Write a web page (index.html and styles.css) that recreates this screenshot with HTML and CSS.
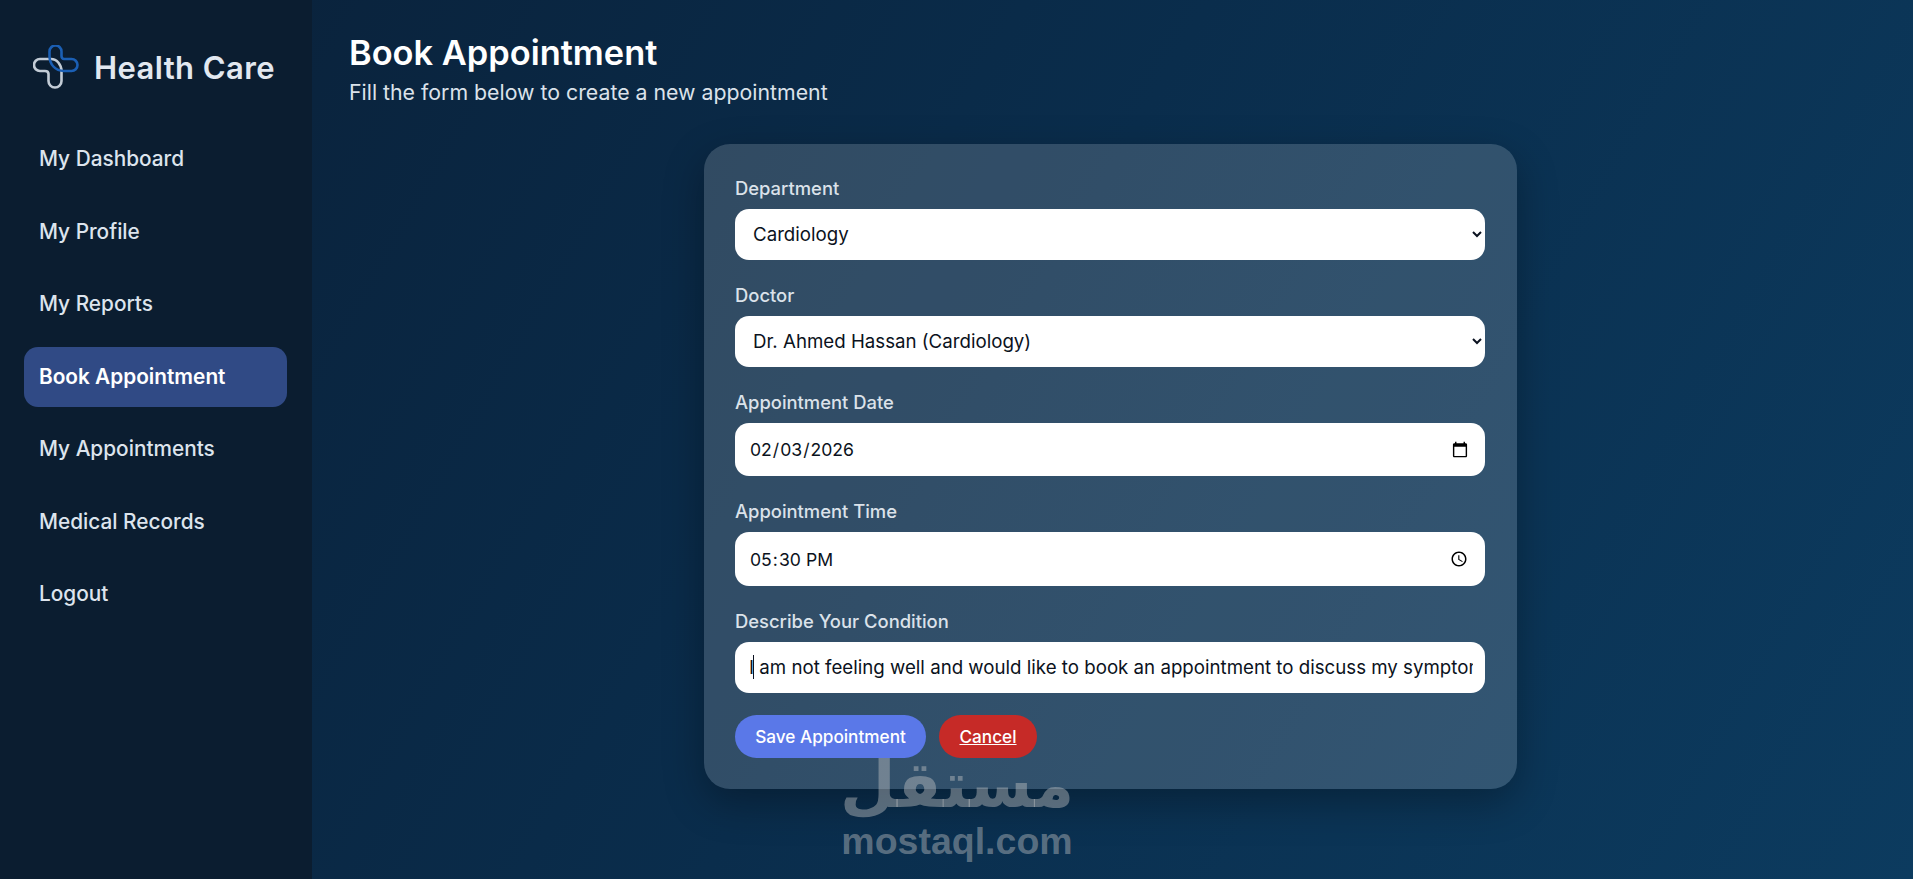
FILE: index.html
```html
<!DOCTYPE html>
<html lang="en">
<head>
    <meta charset="UTF-8">
    <title>Book Appointment</title>
    <link rel="stylesheet" href="styles.css">
</head>
<body>
    <aside class="sidebar">
        <div class="brand">
            <svg class="brand-logo" viewBox="0 0 46 44" fill="none" stroke-width="2.6">
                <path d="M7 14 H18 C24 14 28.500 20 28.500 26 V36 a6.500 6.500 0 0 1 -13 0 V29 C15.500 27 14 26 12 26 H7 a6 6 0 0 1 0 -12 Z" stroke="#c3ccd6"/>
                <path d="M16.500 6.500 a6 6 0 0 1 12 0 V11 C28.500 13 29.500 14 31 14 H38.500 a6 6 0 0 1 0 12 H31 C22 26 16.500 19 16.500 11 Z" stroke="#1b5fb4"/>
            </svg>
            <span class="brand-name">Health Care</span>
        </div>
        <nav class="nav">
            <a class="nav-item" href="#">My Dashboard</a>
            <a class="nav-item" href="#">My Profile</a>
            <a class="nav-item" href="#">My Reports</a>
            <a class="nav-item active" href="#">Book Appointment</a>
            <a class="nav-item" href="#">My Appointments</a>
            <a class="nav-item" href="#">Medical Records</a>
            <a class="nav-item" href="#">Logout</a>
        </nav>
    </aside>

    <main class="main">
        <h1>Book Appointment</h1>
        <p class="subtitle">Fill the form below to create a new appointment</p>

        <form class="card">
            <label class="field-label">Department</label>
            <select class="field">
                <option>Cardiology</option>
            </select>

            <label class="field-label">Doctor</label>
            <select class="field">
                <option>Dr. Ahmed Hassan (Cardiology)</option>
            </select>

            <label class="field-label">Appointment Date</label>
            <input class="field field-date" type="date" value="2026-02-03">

            <label class="field-label">Appointment Time</label>
            <input class="field field-time" type="time" value="17:30">

            <label class="field-label">Describe Your Condition</label>
            <div class="text-wrap">
                <input class="field field-text" type="text" value="I am not feeling well and would like to book an appointment to discuss my symptoms">
                <span class="caret"></span>
            </div>

            <div class="actions">
                <button class="btn btn-save" type="button">Save Appointment</button>
                <a class="btn btn-cancel" href="#">Cancel</a>
            </div>
        </form>
    </main>

    <div class="watermark">
        <span class="watermark-ar" lang="ar" dir="rtl">مستقل</span>
        <span class="watermark-en">mostaql.com</span>
    </div>
</body>
</html>
```

FILE: styles.css
```css
* {
    box-sizing: border-box;
}
body {
    font-family: 'Inter', sans-serif;
    margin: 0;
    height: 100vh;
    overflow: hidden;
    display: flex;
    background: linear-gradient(120deg, #0a2038 0%, #0a2d4c 50%, #0c3b5f 100%);
    color: #e2e8f0;
}
.sidebar {
    width: 312px;
    flex-shrink: 0;
    background: #0b1d30;
    padding: 45px 25px 0 24px;
}
.brand {
    display: flex;
    align-items: center;
    gap: 15px;
    padding-left: 9px;
    height: 44px;
}
.brand-logo {
    width: 46px;
    height: 44px;
}
.brand-name {
    font-size: 31px;
    font-weight: 600;
    letter-spacing: 0.4px;
    color: #e2e8f0;
}
.nav {
    margin-top: 40px;
    display: flex;
    flex-direction: column;
    gap: 12.500px;
}
.nav-item {
    display: block;
    height: 60px;
    line-height: 60px;
    padding-left: 15px;
    border-radius: 14px;
    color: #dde4ed;
    font-size: 20.800px;
    font-weight: 500;
    text-decoration: none;
}
.nav-item.active {
    background: #304a85;
    color: #fff;
    font-weight: 600;
}
.main {
    flex: 1;
    padding: 32px 41px 0 37px;
}
h1 {
    margin: 0;
    font-size: 34.400px;
    line-height: 42px;
    font-weight: 600;
    color: #fff;
}
.subtitle {
    margin: 4px 0 0;
    font-size: 21.300px;
    line-height: 28px;
    color: #dbe2ea;
}
.card {
    width: 813px;
    height: 645px;
    margin: 38px auto 0;
    padding: 33px 32px 0 31px;
    background: rgba(255, 255, 255, 0.16);
    border-radius: 26px;
    box-shadow: 0 14px 40px rgba(0, 0, 0, 0.3);
}
.field-label {
    display: block;
    font-size: 18.400px;
    line-height: 22px;
    font-weight: 500;
    color: #dbe2ea;
    margin-bottom: 10px;
}
.field {
    display: block;
    width: 100%;
    height: 51px;
    margin-bottom: 24px;
    padding: 0 14px;
    border: none;
    border-radius: 14px;
    background: #fff;
    color: #0b1220;
    font-family: inherit;
    font-size: 18.700px;
    outline: none;
}
.field-date {
    height: 53px;
    font-size: 17.600px;
}
.field-time {
    height: 54px;
    font-size: 17.600px;
}
.text-wrap {
    position: relative;
}
.field-text {
    margin-bottom: 22px;
    padding-right: 12px;
}
.caret {
    position: absolute;
    left: 18px;
    top: 13px;
    width: 1px;
    height: 24px;
    background: #0b1220;
}
.actions {
    display: flex;
    gap: 13px;
}
.btn {
    height: 43px;
    line-height: 43px;
    border: none;
    border-radius: 22px;
    color: #fff;
    font-family: inherit;
    font-size: 17.200px;
    font-weight: 500;
    text-align: center;
    padding: 0;
}
.btn-save {
    width: 191px;
    background: #5a78e8;
}
.btn-cancel {
    width: 98px;
    background: #c62a27;
    text-decoration: underline;
}
.watermark {
    position: absolute;
    left: 842px;
    top: 750px;
    width: 230px;
    display: flex;
    flex-direction: column;
    align-items: center;
    color: rgba(200, 200, 200, 0.42);
    pointer-events: none;
}
.watermark-ar {
    font-family: 'DejaVu Sans', sans-serif;
    font-weight: 700;
    font-size: 64px;
    line-height: 70px;
}
.watermark-en {
    font-family: 'Liberation Sans', sans-serif;
    font-weight: 700;
    font-size: 37.500px;
    line-height: 42px;
}
```
